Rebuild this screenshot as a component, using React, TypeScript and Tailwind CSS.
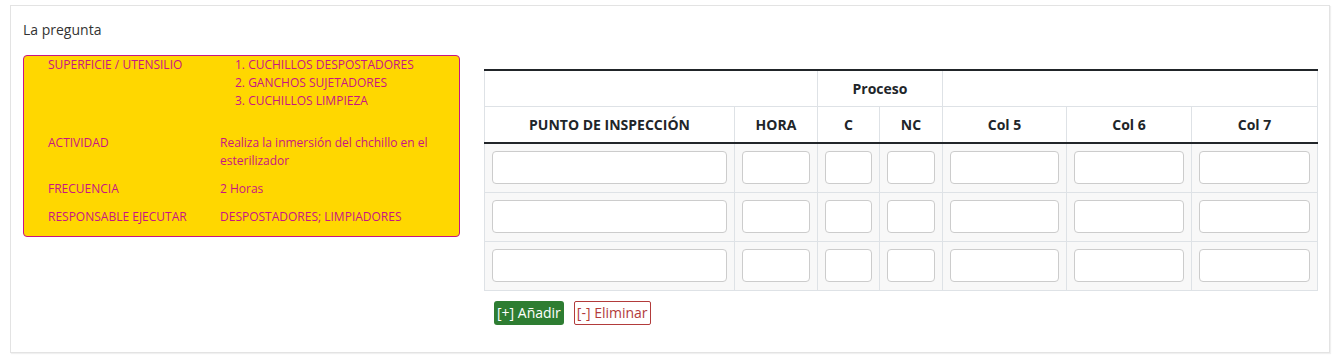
import React from 'react';

const rows = [0, 1, 2];

export default function App() {
  return (
    <div className="min-h-screen bg-white pl-[10px] pt-[5px] font-['Open_Sans',sans-serif] text-[#212529]">
      {/* Tarjeta */}
      <div className="w-[1320px] border border-[#e3e3e3] shadow-[1px_1px_1px_rgba(0,0,0,0.06)] px-[12px] pt-[14px] pb-[27px]">
        <div className="text-[14px] leading-[20px] text-[#333]">La pregunta</div>

        <div className="flex items-start gap-[24px]">
          {/* Caja amarilla */}
          <div className="mt-[15px] w-[437px] rounded-[4px] border border-[#c71585] bg-[#ffd700] px-[24px] pb-[10px] text-[12px] leading-[18px] text-[#c71585]">
            <div className="grid grid-cols-[172px_1fr] pb-[24px]">
              <div>SUPERFICIE / UTENSILIO</div>
              <div className="pl-[15px]">
                <div>1. CUCHILLOS DESPOSTADORES</div>
                <div>2. GANCHOS SUJETADORES</div>
                <div>3. CUCHILLOS LIMPIEZA</div>
              </div>
            </div>
            <div className="grid grid-cols-[172px_1fr] pb-[10px]">
              <div>ACTIVIDAD</div>
              <div>
                Realiza la inmersión del chchillo en el
                <br />
                esterilizador
              </div>
            </div>
            <div className="grid grid-cols-[172px_1fr] pb-[10px]">
              <div>FRECUENCIA</div>
              <div>2 Horas</div>
            </div>
            <div className="grid grid-cols-[172px_1fr]">
              <div>RESPONSABLE EJECUTAR</div>
              <div>DESPOSTADORES; LIMPIADORES</div>
            </div>
          </div>

          {/* Tabla */}
          <div className="mt-[29px] w-[833px]">
            <table className="w-[833px] table-fixed border-collapse text-[14px]">
              <colgroup>
                <col className="w-[250px]" />
                <col className="w-[83px]" />
                <col className="w-[62px]" />
                <col className="w-[63px]" />
                <col className="w-[124px]" />
                <col className="w-[125px]" />
                <col className="w-[126px]" />
              </colgroup>
              <thead>
                <tr className="h-[36px]">
                  <th colSpan={2} className="border border-[#dee2e6] border-t-[#212529] border-t-2" />
                  <th colSpan={2} className="border border-[#dee2e6] border-t-[#212529] border-t-2 text-center font-bold">
                    Proceso
                  </th>
                  <th colSpan={3} className="border border-[#dee2e6] border-t-[#212529] border-t-2" />
                </tr>
                <tr className="h-[37px]">
                  {['PUNTO DE INSPECCIÓN', 'HORA', 'C', 'NC', 'Col 5', 'Col 6', 'Col 7'].map((h) => (
                    <th
                      key={h}
                      className="border border-[#dee2e6] border-b-2 border-b-[#212529] text-center font-bold"
                    >
                      {h}
                    </th>
                  ))}
                </tr>
              </thead>
              <tbody>
                {rows.map((r) => (
                  <tr key={r} className="bg-[#f8f8f8]">
                    {[0, 1, 2, 3, 4, 5, 6].map((c) => (
                      <td key={c} className="border border-[#dee2e6] px-[7px] pt-[7px] pb-[8px]">
                        <input
                          type="text"
                          className="block h-[33px] w-full rounded-[4px] border border-[#ccc] bg-white"
                        />
                      </td>
                    ))}
                  </tr>
                ))}
              </tbody>
            </table>

            {/* Botones */}
            <div className="ml-[10px] mt-[10px] flex gap-[10px] text-[14px]">
              <button className="h-[24px] rounded-[3px] bg-[#2e7d32] px-[3px] leading-[24px] text-white">
                [+] Añadir
              </button>
              <button className="h-[24px] rounded-[2px] border border-[#b23b3b] bg-white px-[2px] leading-[22px] text-[#b23b3b]">
                [-] Eliminar
              </button>
            </div>
          </div>
        </div>
      </div>
    </div>
  );
}
